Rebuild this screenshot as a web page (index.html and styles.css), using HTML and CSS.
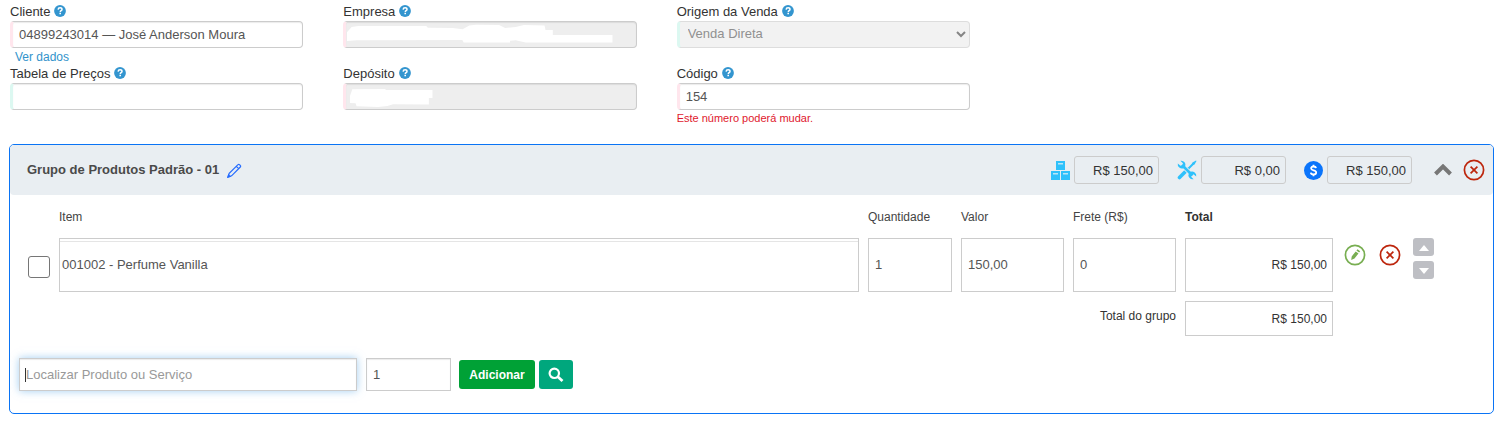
FILE: index.html
```html
<!DOCTYPE html>
<html lang="pt-BR">
<head>
<meta charset="utf-8">
<title>Venda</title>
<link rel="stylesheet" href="styles.css">
</head>
<body>
<svg class="defs" aria-hidden="true">
  <symbol id="help" viewBox="0 0 12 12"><circle cx="6" cy="6" r="5.9" fill="#3395cf"/><path d="M4.1 4.6C4.2 3.3 5 2.8 6.1 2.8s1.900.7 1.900 1.600c0 1.300-1.700 1.300-1.700 2.500" fill="none" stroke="#fff" stroke-width="1.5"/><path d="M5.4 7.8h1.600v1.500H5.4z" fill="#fff"/></symbol>
  <symbol id="remove" viewBox="0 0 22 22"><circle cx="11" cy="11" r="9.6" fill="none" stroke="currentColor" stroke-width="1.7"/><path d="M7.6 7.6l6.8 6.8M14.4 7.6l-6.8 6.8" stroke="currentColor" stroke-width="1.7"/></symbol>
</svg>

<form class="page">
  <section class="fields">
    <div class="field">
      <label for="cliente">Cliente <svg class="help"><use href="#help"/></svg></label>
      <input class="control required" id="cliente" value="04899243014 — José Anderson Moura">
      <a class="details" href="#">Ver dados</a>
    </div>
    <div class="field">
      <label for="empresa">Empresa <svg class="help"><use href="#help"/></svg></label>
      <div class="masked">
        <input class="control required" id="empresa" disabled>
        <svg class="mask" viewBox="24 63 885 81"><path fill="#fff" d="M36 97L50 81 70 78H275L280 83 355 84 385 88 405 76 425 74 495 75 513 84 545 81 570 75 632 76 635 90H657V105H837V128H575L545 121 528 122V128H388L384 120 65 121 36 123z"/></svg>
      </div>
    </div>
    <div class="field">
      <label for="origem">Origem da Venda <svg class="help"><use href="#help"/></svg></label>
      <div class="masked">
        <select class="control optional" id="origem" disabled><option>Venda Direta</option></select>
        <svg class="arrow" viewBox="0 0 10 7"><path d="M1 1l4 4 4-4" fill="none" stroke="#858585" stroke-width="2"/></svg>
      </div>
    </div>
    <div class="field second">
      <label for="tabela">Tabela de Preços <svg class="help"><use href="#help"/></svg></label>
      <input class="control optional" id="tabela">
    </div>
    <div class="field">
      <label for="deposito">Depósito <svg class="help"><use href="#help"/></svg></label>
      <div class="masked">
        <input class="control required" id="deposito" disabled>
        <svg class="mask" viewBox="24 249 885 81"><path fill="#fff" d="M45 288L52 268 150 267 155 270H294V294H283V314L175 313 158 318 130 321 65 319 62 310 45 309z"/></svg>
      </div>
    </div>
    <div class="field">
      <label for="codigo">Código <svg class="help"><use href="#help"/></svg></label>
      <input class="control required" id="codigo" value="154">
      <span class="warning">Este número poderá mudar.</span>
    </div>
  </section>

  <section class="group">
    <header class="group-head">
      <h2>Grupo de Produtos Padrão - 01</h2>
      <button class="icon-button rename" type="button" aria-label="Renomear"><svg width="15" height="15" viewBox="0 0 15 15" fill="none" stroke="#246bff" stroke-width="1.2"><path d="M1 14l1.200-3.600L11 1.700a1 1 0 0 1 1.500 0l.8.8a1 1 0 0 1 0 1.500L4.600 12.800zM9.300 3.400l2.300 2.300"/><path d="M1 14l.6-2 1.400 1.400z" fill="#246bff"/></svg></button>
      <div class="sums">
        <div class="sum">
          <svg width="19" height="19" viewBox="0 0 19 19"><path fill="#2fc1fb" d="M5 0h9v9H5zM0 10h9v9H0zM10 10h9v9h-9z"/><path fill="#b9e6f7" d="M7 2h5v1.500H7zM2 12h5v1.500H2zM12 12h5v1.500h-5z"/></svg>
          <input class="sum-value" aria-label="Total de produtos" value="R$ 150,00" readonly>
        </div>
        <div class="sum">
          <svg width="20" height="20" viewBox="0 0 20 20"><path d="M2.500 17.500L10.500 9.500" stroke="#2fc1fb" stroke-width="3.600" stroke-linecap="round"/><path d="M10.500 9.500L17 3" stroke="#2fc1fb" stroke-width="2"/><path d="M15.500 2.500L19 .5l.5.500-2 3.500-2 .5-.7-.7z" fill="#2fc1fb"/><path d="M5 5l10.500 10.500" stroke="#e9eef2" stroke-width="4.500"/><path d="M5 5l10.500 10.500" stroke="#2fc1fb" stroke-width="2.700"/><path d="M3.400.8a4.300 4.300 0 0 1 4.800 5.900L6.700 8.200A4.300 4.300 0 0 1 .8 3.400L3.500 5.700 5.600 5.200 5.900 3.300zM16.600 19.200a4.300 4.300 0 0 1-4.800-5.900l1.500-1.500a4.300 4.300 0 0 1 5.900 4.800l-2.700-2.300-2.100.5-.3 1.900z" fill="#2fc1fb"/></svg>
          <input class="sum-value" aria-label="Total de serviços" value="R$ 0,00" readonly>
        </div>
        <div class="sum">
          <svg width="19" height="19" viewBox="0 0 19 19"><circle cx="9.500" cy="9.500" r="9.500" fill="#0a74fb"/><path d="M12 7.200C11.800 6 10.900 5.500 9.500 5.500c-1.500 0-2.400.7-2.400 1.800 0 2.700 5.100 1.400 5.100 4.200 0 1.300-1 2-2.700 2-1.500 0-2.500-.6-2.700-1.900M9.500 3.700v2M9.500 13.300v2" fill="none" stroke="#fff" stroke-width="1.800"/></svg>
          <input class="sum-value" aria-label="Total geral" value="R$ 150,00" readonly>
        </div>
      </div>
      <button class="icon-button collapse" type="button" aria-label="Recolher"><svg width="18" height="12" viewBox="0 0 18 12"><path d="M1.500 10L9 2.500 16.500 10" fill="none" stroke="#777" stroke-width="4"/></svg></button>
      <button class="icon-button remove" type="button" aria-label="Remover grupo"><svg width="22" height="22"><use href="#remove"/></svg></button>
    </header>

    <table class="items">
      <colgroup><col class="c-check"><col><col class="c-qty"><col class="c-price"><col class="c-price"><col class="c-total"><col class="c-actions"></colgroup>
      <thead>
        <tr><td></td><th>Item</th><th>Quantidade</th><th>Valor</th><th>Frete (R$)</th><th class="strong">Total</th><td></td></tr>
      </thead>
      <tbody>
        <tr>
          <td><input class="check" type="checkbox" aria-label="Selecionar item"></td>
          <td><div class="item-box"><input class="item-name" aria-label="Item" value="001002 - Perfume Vanilla"></div></td>
          <td><input class="cell" aria-label="Quantidade" value="1"></td>
          <td><input class="cell" aria-label="Valor" value="150,00"></td>
          <td><input class="cell" aria-label="Frete" value="0"></td>
          <td><input class="cell amount" aria-label="Total" value="R$ 150,00" readonly></td>
          <td class="actions-cell">
            <div class="actions">
              <button class="icon-button edit" type="button" aria-label="Editar item"><svg width="22" height="22" viewBox="0 0 22 22"><circle cx="11" cy="11" r="9.600" fill="none" stroke="#78ae51" stroke-width="1.700"/><path d="M7.200 16l.5-3.600 4-5 2.800 2-4 5zM12.400 6.600l1.100-1.400 2.700 2-1.100 1.400z" fill="#78ae51"/></svg></button>
              <button class="icon-button remove" type="button" aria-label="Remover item"><svg width="22" height="22"><use href="#remove"/></svg></button>
              <div class="movers">
                <button class="move" type="button" aria-label="Mover para cima"><svg width="10" height="6" viewBox="0 0 10 6"><path d="M0 6l5-6 5 6z" fill="#fff"/></svg></button>
                <button class="move" type="button" aria-label="Mover para baixo"><svg width="10" height="6" viewBox="0 0 10 6"><path d="M0 0l5 6 5-6z" fill="#fff"/></svg></button>
              </div>
            </div>
          </td>
        </tr>
      </tbody>
      <tfoot>
        <tr>
          <td colspan="5"><label class="total-label" for="total-grupo">Total do grupo</label></td>
          <td><input class="cell amount short" id="total-grupo" value="R$ 150,00" readonly></td>
          <td></td>
        </tr>
      </tfoot>
    </table>

    <div class="add-row">
      <div class="search"><input class="add-input focused" aria-label="Produto ou serviço" placeholder="Localizar Produto ou Serviço"></div>
      <input class="add-input add-qty" aria-label="Quantidade a adicionar" value="1">
      <button class="button add" type="button">Adicionar</button>
      <button class="button find" type="button" aria-label="Pesquisar"><svg width="16" height="16" viewBox="0 0 16 16" fill="none" stroke="#fff"><circle cx="6.300" cy="6.300" r="4.700" stroke-width="2.200"/><path d="M9.800 9.800l4.700 4.200" stroke-width="2.800"/></svg></button>
    </div>
  </section>
</form>
</body>
</html>
```
FILE: styles.css
```css
* { box-sizing: border-box; }
body { margin: 0; background: #fff; color: #333; font-family: "Liberation Sans", Arial, sans-serif; font-size: 12px; }
input, select, button { margin: 0; font-family: inherit; }
svg { display: block; flex: none; }
.defs { position: absolute; width: 0; height: 0; }

.page { padding: 1px 12px 12px 9px; }
.fields { display: grid; grid-template-columns: repeat(3, 1fr) 1.65fr; column-gap: 40px; padding-left: 1px; }
.field { min-height: 62px; }
.second { grid-column: 1; }
.field label { display: flex; align-items: center; gap: 4px; height: 20px; font-size: 13px; }
.help { width: 12px; height: 12px; }
.control { display: block; width: 100%; height: 27px; padding: 0 6px; border: 1px solid #ccc; border-left-width: 3px; border-radius: 4px; background: #fff; box-shadow: inset 0 1px 1px rgba(0, 0, 0, .08); color: #555; font-size: 13px; }
.control:disabled { background: #eee; opacity: 1; }
select.control { appearance: none; padding: 0 8px 2px; }
select.control:disabled { background: #f2f2f2; border-color: #ddd; color: #909090; box-shadow: none; }
.control.required { border-left-color: #ffe6ed; }
.control.optional, select.control.optional:disabled { border-left-color: #dcf8f1; }
.masked { position: relative; }
.mask { position: absolute; top: 0; left: 0; width: 100%; height: 27px; pointer-events: none; }
.arrow { position: absolute; top: 10px; right: 4px; width: 10px; height: 7px; pointer-events: none; }
.details { display: block; padding-left: 5px; color: #3293cb; line-height: 18px; height: 15px; text-decoration: none; }
.warning { display: block; color: #e0182d; font-size: 11px; line-height: 16px; }

.group { margin-top: 18px; border: 1px solid #0a74f5; border-radius: 5px; }
.group-head { display: flex; align-items: center; height: 50px; padding: 0 8px 0 17px; border-radius: 4px; background: #e9eef2; }
h2 { margin: 0; color: #4a4a4a; font-size: 13px; line-height: 20px; white-space: nowrap; }
.icon-button { display: block; padding: 0; border: 0; background: none; }
.rename { margin-left: 8px; }
.sums { display: flex; gap: 18px; margin-left: auto; }
.sum { display: flex; align-items: center; gap: 4px; }
.sum-value { width: 85px; height: 28px; padding: 0 5px; border: 1px solid #ccc; border-radius: 3px; background: #e9eef2; color: #333; font-size: 13px; text-align: right; }
.collapse { margin: 0 11px 0 22px; }
.remove { color: #bd260d; }

.items { width: 100%; border-collapse: collapse; table-layout: fixed; }
.c-check { width: 49px; }
.c-qty { width: 93px; }
.c-price { width: 112px; }
.c-total { width: 157px; }
.c-actions { width: 151px; }
.items td, .items th { padding: 0 9px 0 0; }
.items th { height: 43px; color: #444; font-weight: 400; text-align: left; }
.items .strong { color: #333; font-weight: 700; }
.check { display: block; appearance: none; width: 22px; height: 22px; margin: 3px 0 0 18px; border: 1px solid #767676; border-radius: 3px; background: #fff; }
.item-box { height: 54px; padding-top: 2px; border: 1px solid #ccc; }
.item-name { display: block; width: 100%; height: 50px; padding: 0 2px 4px; border: 0; border-top: 1px solid #e5e5e5; background: #fff; color: #555; font-size: 13px; }
.cell { display: block; width: 100%; height: 54px; padding: 0 6px 2px; border: 1px solid #ccc; background: #fff; color: #555; font-size: 13px; }
.amount { padding: 0 5px; color: #333; font-size: 12px; text-align: right; }
.short { height: 35px; margin-top: 9px; }
.total-label { display: block; padding-top: 4px; text-align: right; }
.items .actions-cell { padding: 0; vertical-align: top; }
.actions { display: flex; align-items: flex-start; gap: 12px; padding-left: 2px; }
.actions .icon-button { margin-top: 6px; }
.edit { margin-right: 1px; }
.movers { display: grid; gap: 5px; }
.move { display: grid; place-items: center; width: 21px; height: 18px; padding: 2px 0 0; border: 0; border-radius: 3px; background: #bebfc4; }

.add-row { display: flex; align-items: center; padding: 22px 9px; }
.search { position: relative; flex: 0 1 338px; margin-right: 9px; }
.search::before { content: ""; position: absolute; top: 10px; left: 6px; width: 1px; height: 14px; background: #333; }
.add-input { display: block; width: 100%; height: 33px; padding: 0 6px; border: 1px solid #ccc; background: #fff; box-shadow: inset 0 1px 1px rgba(0, 0, 0, .08); color: #555; font-size: 13px; }
.add-input::placeholder { color: #999; opacity: 1; }
.focused { box-shadow: inset 0 1px 1px rgba(0, 0, 0, .08), 0 0 8px rgba(102, 175, 233, .6); }
.add-qty { width: 85px; margin-right: 8px; }
.button { display: grid; place-items: center; height: 29px; padding: 0; border: 0; border-radius: 3px; color: #fff; font-size: 13px; }
.add { width: 76px; margin-right: 4px; background: #00a136; font-size: 12px; font-weight: 700; }
.find { width: 34px; background: #00a77d; }
```
